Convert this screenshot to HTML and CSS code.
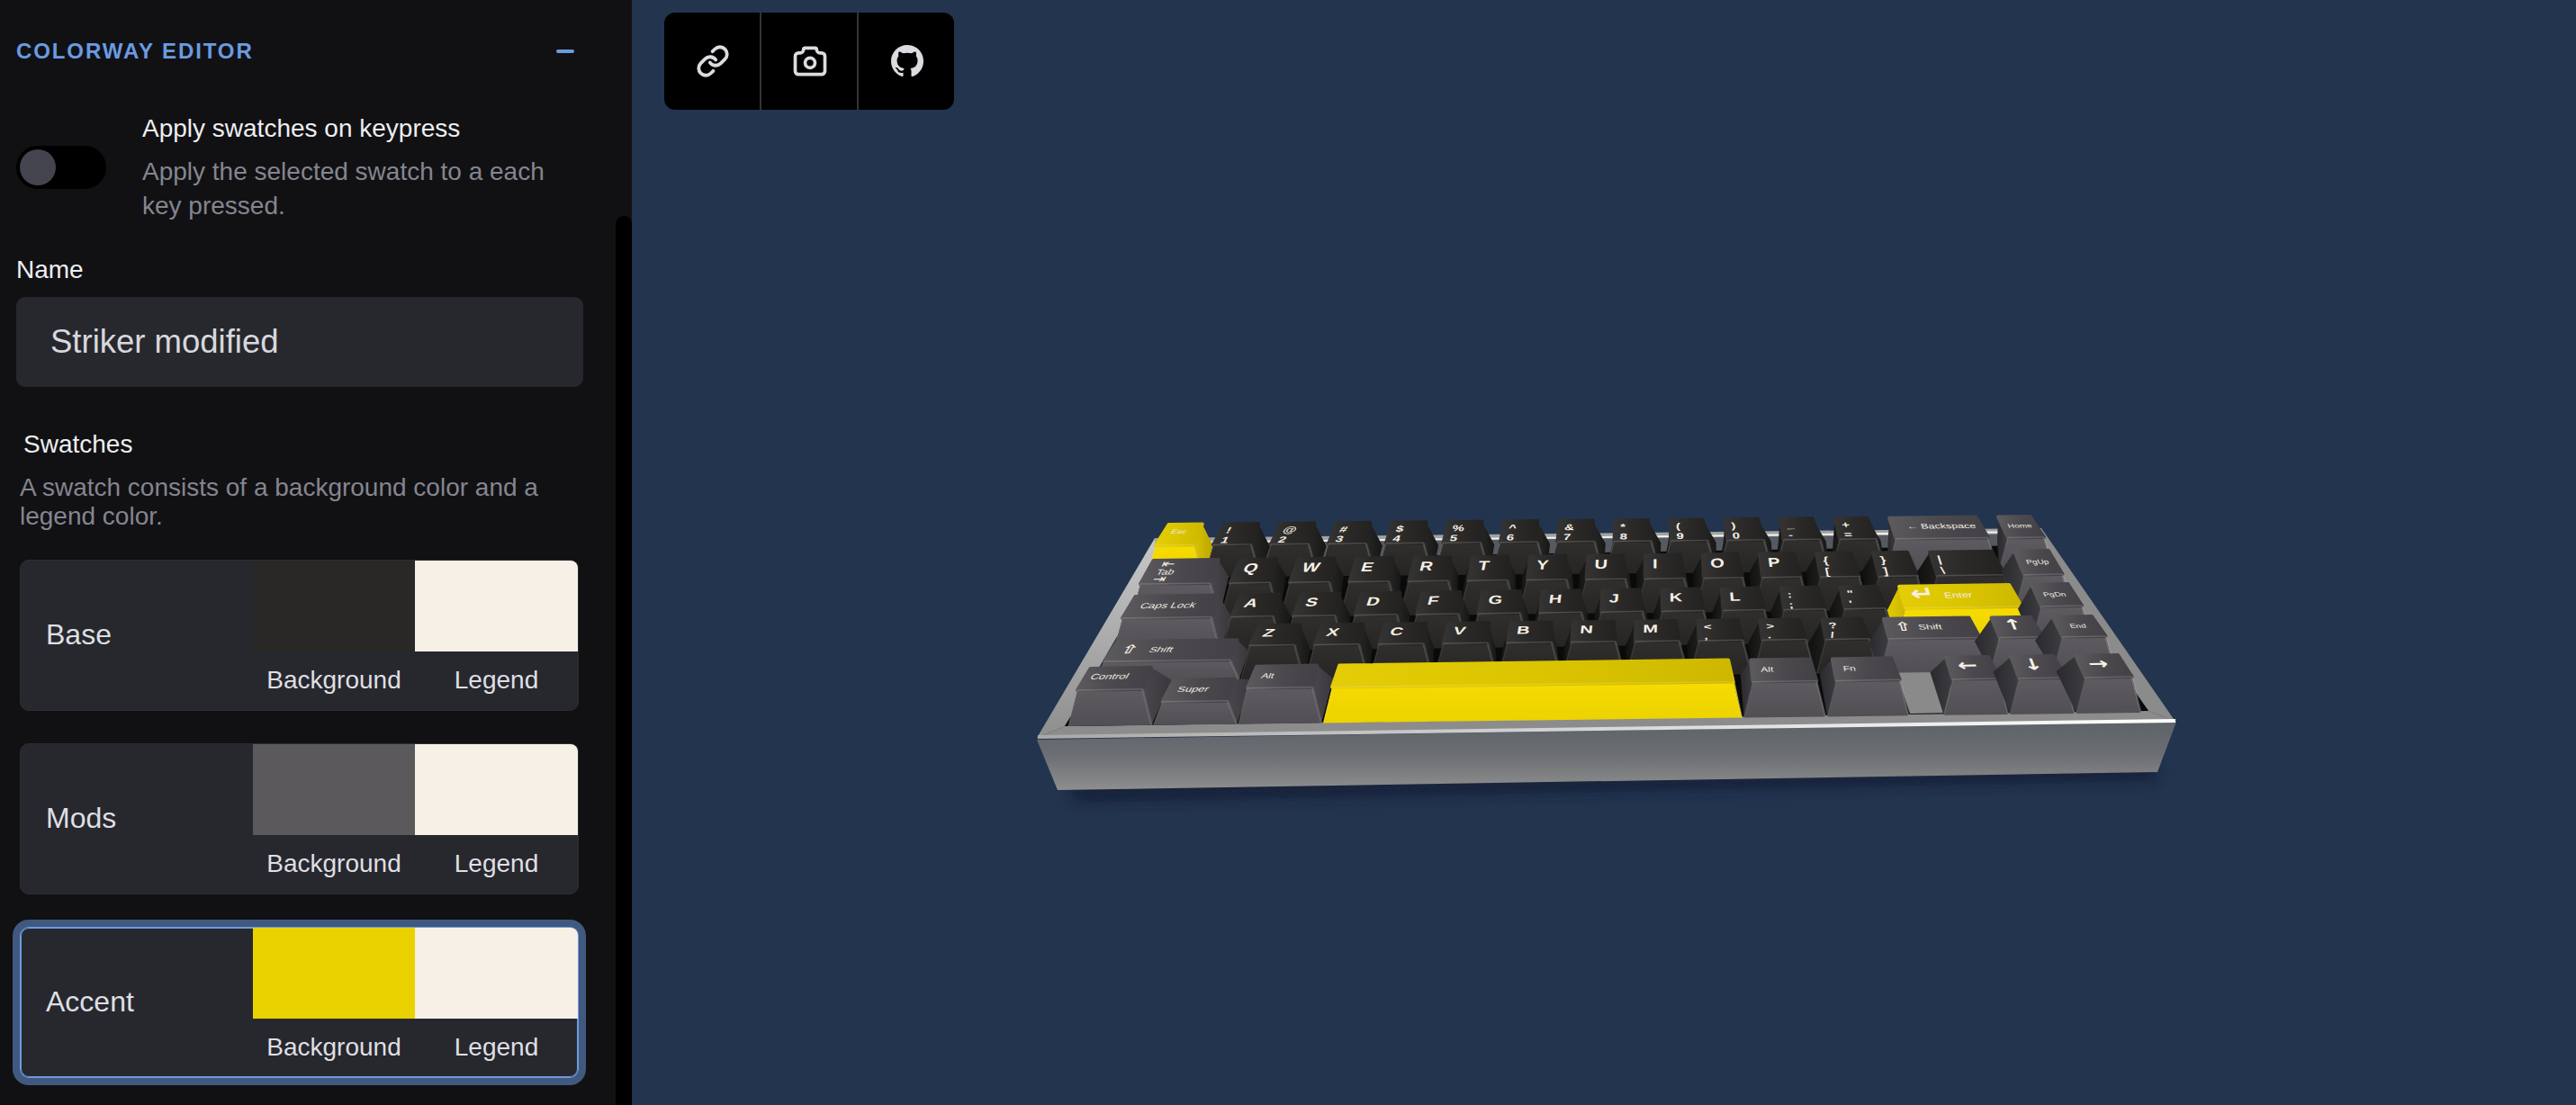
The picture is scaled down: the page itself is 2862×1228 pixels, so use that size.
FILE: index.html
```html
<!DOCTYPE html>
<html lang="en">
<head>
    <meta charset="UTF-8">
    <title>Colorway Editor</title>
    <link rel="stylesheet" href="styles.css">
</head>
<body>
    <div class="sidebar">
        <div class="scroll-track"></div>

        <div class="panel-head">
            <span class="panel-title">COLORWAY EDITOR</span>
            <span class="panel-collapse"></span>
        </div>

        <div class="toggle-row">
            <div class="toggle"><span class="toggle-thumb"></span></div>
            <div class="toggle-text">
                <div class="toggle-title">Apply swatches on keypress</div>
                <div class="toggle-desc">Apply the selected swatch to a each key pressed.</div>
            </div>
        </div>

        <div class="name-label">Name</div>
        <div class="name-input">Striker modified</div>

        <div class="swatches-label">Swatches</div>
        <div class="swatches-desc">A swatch consists of a background color and a legend color.</div>

        <div class="swatch-card">
            <div class="swatch-name">Base</div>
            <div class="swatch-col">
                <div class="swatch-color color-base"></div>
                <div class="swatch-caption">Background</div>
            </div>
            <div class="swatch-col">
                <div class="swatch-color color-legend"></div>
                <div class="swatch-caption">Legend</div>
            </div>
        </div>

        <div class="swatch-card">
            <div class="swatch-name">Mods</div>
            <div class="swatch-col">
                <div class="swatch-color color-mods"></div>
                <div class="swatch-caption">Background</div>
            </div>
            <div class="swatch-col">
                <div class="swatch-color color-legend"></div>
                <div class="swatch-caption">Legend</div>
            </div>
        </div>

        <div class="swatch-card selected">
            <div class="swatch-name">Accent</div>
            <div class="swatch-col">
                <div class="swatch-color color-accent"></div>
                <div class="swatch-caption">Background</div>
            </div>
            <div class="swatch-col">
                <div class="swatch-color color-legend"></div>
                <div class="swatch-caption">Legend</div>
            </div>
        </div>
    </div>

    <div class="stage">
        <svg id="keyboard" class="keyboard" viewBox="702 0 2160 1228"></svg>

        <div class="toolbar">
            <div class="tool-btn">
                <svg class="icon-link" viewBox="0 0 24 24" fill="none" stroke="currentColor" stroke-width="2.4" stroke-linecap="round" stroke-linejoin="round">
                    <path d="M10 13a5 5 0 0 0 7.54.54l3-3a5 5 0 0 0-7.07-7.07l-1.72 1.71"/>
                    <path d="M14 11a5 5 0 0 0-7.54-.54l-3 3a5 5 0 0 0 7.07 7.07l1.71-1.71"/>
                </svg>
            </div>
            <div class="tool-btn">
                <svg class="icon-camera" viewBox="0 0 24 24" fill="none" stroke="currentColor" stroke-width="2" stroke-linecap="round" stroke-linejoin="round">
                    <path d="M5 7h1a2 2 0 0 0 2 -2a1 1 0 0 1 1 -1h6a1 1 0 0 1 1 1a2 2 0 0 0 2 2h1a2 2 0 0 1 2 2v9a2 2 0 0 1 -2 2h-14a2 2 0 0 1 -2 -2v-9a2 2 0 0 1 2 -2"/>
                    <circle cx="12" cy="13" r="3"/>
                </svg>
            </div>
            <div class="tool-btn">
                <svg class="icon-github" viewBox="0 0 16 16" fill="currentColor">
                    <path d="M8 0C3.58 0 0 3.58 0 8c0 3.54 2.29 6.53 5.47 7.59.4.07.55-.17.55-.38 0-.19-.01-.82-.01-1.49-2.01.37-2.53-.49-2.69-.94-.09-.23-.48-.94-.82-1.13-.28-.15-.68-.52-.01-.53.63-.01 1.08.58 1.23.82.72 1.21 1.87.87 2.33.66.07-.52.28-.87.51-1.07-1.78-.2-3.64-.89-3.64-3.95 0-.87.31-1.59.82-2.15-.08-.2-.36-1.02.08-2.12 0 0 .67-.21 2.2.82.64-.18 1.32-.27 2-.27.68 0 1.36.09 2 .27 1.53-1.04 2.2-.82 2.2-.82.44 1.1.16 1.92.08 2.12.51.56.82 1.27.82 2.15 0 3.07-1.87 3.75-3.65 3.95.29.25.54.73.54 1.48 0 1.07-.01 1.93-.01 2.2 0 .21.15.46.55.38A8.013 8.013 0 0016 8c0-4.42-3.58-8-8-8z"/>
                </svg>
            </div>
        </div>
    </div>

    <script src="keyboard.js"></script>
</body>
</html>
```

FILE: styles.css
```css
* {
    margin: 0;
    padding: 0;
    box-sizing: border-box;
    font-family: "Liberation Sans", Arial, sans-serif;
}

body {
    display: flex;
    height: 1228px;
    overflow: hidden;
    background-color: #23344f;
}

/* Left panel */
.sidebar {
    position: relative;
    width: 702px;
    height: 1228px;
    flex-shrink: 0;
    padding: 38px 54px 0 18px;
    background-color: #111114;
    overflow: hidden;
}

.scroll-track {
    position: absolute;
    top: 240px;
    right: 0;
    bottom: 0;
    width: 18px;
    background-color: #000;
    border-radius: 9px 9px 0 0;
}

.panel-head {
    display: flex;
    align-items: center;
    justify-content: space-between;
    height: 38px;
    padding-right: 10px;
}

.panel-title {
    font-size: 24px;
    font-weight: bold;
    letter-spacing: 1.9px;
    color: #6b9be0;
}

.panel-collapse {
    width: 20px;
    height: 4px;
    border-radius: 2px;
    background-color: #6b9be0;
}

.toggle-row {
    display: flex;
    align-items: center;
    margin-top: 48px;
}

.toggle {
    width: 100px;
    height: 48px;
    flex-shrink: 0;
    padding: 4px;
    background-color: #000;
    border-radius: 24px;
}

.toggle-thumb {
    display: block;
    width: 40px;
    height: 40px;
    border-radius: 50%;
    background-color: #44444f;
}

.toggle-text {
    margin-left: 40px;
}

.toggle-title {
    font-size: 28px;
    line-height: 38px;
    color: #eeeef0;
}

.toggle-desc {
    margin-top: 10px;
    font-size: 28px;
    line-height: 38px;
    color: #85858f;
}

.name-label {
    margin-top: 36px;
    font-size: 28px;
    line-height: 32px;
    color: #eeeef0;
}

.name-input {
    display: flex;
    align-items: center;
    height: 100px;
    margin-top: 14px;
    padding-left: 38px;
    font-size: 36.5px;
    color: #d8d8dc;
    background-color: #27282e;
    border-radius: 10px;
}

.swatches-label {
    margin-top: 48px;
    margin-left: 8px;
    font-size: 28px;
    line-height: 32px;
    color: #eeeef0;
}

.swatches-desc {
    margin-top: 16px;
    margin-left: 4px;
    font-size: 28px;
    line-height: 32px;
    color: #85858f;
}

.swatch-card {
    display: flex;
    width: 621px;
    height: 168px;
    margin: 32px 0 36px 4px;
    background-color: #27282e;
    border: 1px solid #2c2d33;
    border-radius: 10px;
}

.swatch-card + .swatch-card {
    margin-top: 0;
}

.swatch-card.selected {
    border-color: #6d9be0;
    box-shadow: inset 0 0 0 1px #6d9be0, 0 0 0 8px #41597f;
}

.swatch-name {
    flex: 1;
    display: flex;
    align-items: center;
    padding: 0 0 2px 28px;
    font-size: 32px;
    color: #dfdfe3;
}

.swatch-col {
    width: 180px;
}

.swatch-col:last-child {
    width: 181px;
}

.swatch-color {
    height: 101px;
}

.swatch-col:last-child .swatch-color {
    border-top-right-radius: 8px;
}

.color-base {
    background-color: #292826;
}

.color-mods {
    background-color: #5b595c;
}

.color-accent {
    background-color: #ead100;
}

.color-legend {
    background-color: #f6f0e6;
}

.swatch-caption {
    margin-top: 16px;
    font-size: 28px;
    line-height: 32px;
    text-align: center;
    color: #dfdfe3;
}

/* 3D view */
.stage {
    position: relative;
    flex: 1;
    height: 1228px;
}

.keyboard {
    position: absolute;
    top: 0;
    left: 0;
    width: 2160px;
    height: 1228px;
}

.lg-bold {
    font-family: "Liberation Sans", "DejaVu Sans", sans-serif;
    font-weight: bold;
    fill: #f6f0e6;
}

.lg-small {
    font-family: "Liberation Sans", "DejaVu Sans", sans-serif;
    fill: #f0ebe2;
}

.lg-glyph {
    font-family: "DejaVu Sans", sans-serif;
    font-weight: bold;
    fill: #f6f0e6;
}

.cap-top {
    stroke-width: 4;
    stroke-linejoin: round;
}

.toolbar {
    position: absolute;
    top: 14px;
    left: 36px;
    display: flex;
    width: 322px;
    height: 108px;
    background-color: #000;
    border-radius: 12px;
}

.tool-btn {
    flex: 1;
    display: flex;
    align-items: center;
    justify-content: center;
    padding-left: 2px;
    color: #dcdce0;
    border-left: 2px solid #333;
}

.tool-btn:first-child {
    border-left: none;
}

.icon-link {
    width: 38px;
    height: 38px;
}

.icon-camera {
    width: 44px;
    height: 44px;
}

.icon-github {
    width: 36px;
    height: 36px;
}
```

FILE: keyboard.js
```js
// Row tables, measured off the render. Index 0 is the line behind row 0.
const rowLeft = [1290, 1273, 1256, 1236, 1216, 1186];
const rowPitch = [61.6, 63.06, 65.4, 68, 70.9, 74.6];
const topYLeft = [569, 606, 649, 687, 719, 767];
const topYRight = [559, 597, 638, 673, 707, 752];
const keyHeight = [40, 36, 38, 38, 38, 40];
const topDepth = [22, 23, 26, 24, 22, 24];

// small: [text, x, y, font size]  pre: [glyph, x, y, font size]
const keys = [
    // row 0
    { r: 0, a: 0, b: 1, c: 'acc', small: ['Esc', 8, 16, 10] },
    { r: 0, a: 1, b: 2, num: ['!', '1'] }, { r: 0, a: 2, b: 3, num: ['@', '2'] },
    { r: 0, a: 3, b: 4, num: ['#', '3'] }, { r: 0, a: 4, b: 5, num: ['$', '4'] },
    { r: 0, a: 5, b: 6, num: ['%', '5'] }, { r: 0, a: 6, b: 7, num: ['^', '6'] },
    { r: 0, a: 7, b: 8, num: ['&', '7'] }, { r: 0, a: 8, b: 9, num: ['*', '8'] },
    { r: 0, a: 9, b: 10, num: ['(', '9'] }, { r: 0, a: 10, b: 11, num: [')', '0'] },
    { r: 0, a: 11, b: 12, num: ['_', '-'] }, { r: 0, a: 12, b: 13, num: ['+', '='] },
    { r: 0, a: 13, b: 15, c: 'mod', small: ['← Backspace', 16, 19, 12.5] },
    { r: 0, a: 15, b: 16, c: 'mod', small: ['Home', 6, 19, 10] },
    // row 1
    { r: 1, a: 0, b: 1.5, c: 'mod', tab: true },
    ...'QWERTYUIOP'.split('').map((k, i) => ({ r: 1, a: 1.5 + i, b: 2.5 + i, ch: k })),
    { r: 1, a: 11.5, b: 12.5, num: ['{', '['] }, { r: 1, a: 12.5, b: 13.5, num: ['}', ']'] },
    { r: 1, a: 13.5, b: 15, num: ['|', '\\'] },
    { r: 1, a: 15, b: 16, c: 'mod', small: ['PgUp', 8, 20, 10] },
    // row 2
    { r: 2, a: 0, b: 1.75, c: 'mod', small: ['Caps Lock', 12, 20, 13] },
    ...'ASDFGHJKL'.split('').map((k, i) => ({ r: 2, a: 1.75 + i, b: 2.75 + i, ch: k })),
    { r: 2, a: 10.75, b: 11.75, num: [':', ';'] }, { r: 2, a: 11.75, b: 12.75, num: ['"', "'"] },
    { r: 2, a: 12.75, b: 15, c: 'acc', pre: ['↵', 10, 23, 32], small: ['Enter', 47, 20, 13] },
    { r: 2, a: 15, b: 16, c: 'mod', small: ['PgDn', 8, 20, 10] },
    // row 3
    { r: 3, a: 0, b: 2.25, c: 'mod', dy: 16, pre: ['⇧', 10, 22, 22], small: ['Shift', 42, 20, 13] },
    ...'ZXCVBNM'.split('').map((k, i) => ({ r: 3, a: 2.25 + i, b: 3.25 + i, ch: k })),
    { r: 3, a: 9.25, b: 10.25, num: ['<', ','] }, { r: 3, a: 10.25, b: 11.25, num: ['>', '.'] },
    { r: 3, a: 11.25, b: 12.25, num: ['?', '/'] },
    { r: 3, a: 12.25, b: 14, c: 'mod', pre: ['⇧', 10, 22, 22], small: ['Shift', 36, 20, 13] },
    { r: 3, a: 14, b: 15, c: 'mod', arrow: '↑' },
    { r: 3, a: 15, b: 16, c: 'mod', small: ['End', 14, 20, 10] },
    // row 4
    { r: 4, a: 0, b: 1.25, c: 'mod', small: ['Control', 6, 18, 13] },
    { r: 4, a: 1.25, b: 2.5, c: 'mod', dy: 14, small: ['Super', 10, 20, 13] },
    { r: 4, a: 2.5, b: 3.75, c: 'mod', small: ['Alt', 10, 20, 12] },
    { r: 4, a: 3.75, b: 10, c: 'acc' },
    { r: 4, a: 10, b: 11.25, c: 'mod', small: ['Alt', 10, 20, 12] },
    { r: 4, a: 11.25, b: 12.5, c: 'mod', small: ['Fn', 10, 20, 12] },
    { r: 4, a: 13, b: 14, c: 'mod', arrow: '←' },
    { r: 4, a: 14, b: 15, c: 'mod', arrow: '↓' },
    { r: 4, a: 15, b: 16, c: 'mod', arrow: '→' }
];

const pts = (...list) => list.map(p => `${p[0].toFixed(1)},${p[1].toFixed(1)}`).join(' ');
const poly = (fill, ...list) => `<polygon fill="${fill}" points="${pts(...list)}"/>`;
const edge = (p, q, color, w) =>
    `<line x1="${p[0]}" y1="${p[1]}" x2="${q[0]}" y2="${q[1]}" stroke="${color}" stroke-width="${w}"/>`;

// index 0 of the tables is the back line, so row r lives at r + 1
const cellX = (r, u) => rowLeft[r + 1] + u * rowPitch[r + 1] + 5 * Math.sin(Math.PI * u / 16);
const topY = (r, u) => topYLeft[r + 1] + (topYRight[r + 1] - topYLeft[r + 1]) * u / 16;
const lean = u => 13 - 27 * u / 16;

function legendText(key, fl, bl, fr, depth) {
    // local space: x along the key's front edge, y runs 0-36 from back to front
    const w = fr[0] - fl[0];
    const my = (fr[1] - fl[1]) / w;
    const sx = (fl[0] - bl[0]) / 36;
    const sy = depth / 36;
    const open = `<g transform="matrix(1 ${my.toFixed(4)} ${sx.toFixed(3)} ${sy.toFixed(3)} ${bl[0].toFixed(1)} ${bl[1].toFixed(1)})">`;
    let out = '';
    const put = (s, x, y, size, cls) => {
        const safe = s.replace('&', '&amp;').replace('<', '&lt;');
        out += `<text class="${cls}" x="${x}" y="${y}" font-size="${size}">${safe}</text>`;
    };
    if (key.ch) put(key.ch, 8, 20, 20, 'lg-bold');
    if (key.num) {
        put(key.num[0], 6, 16, 15, 'lg-bold');
        put(key.num[1], 6, 33, 15, 'lg-bold');
    }
    if (key.pre) put(key.pre[0], key.pre[1], key.pre[2], key.pre[3], 'lg-glyph');
    if (key.small) put(key.small[0], key.small[1], key.small[2], key.small[3], 'lg-small');
    if (key.arrow) put(key.arrow, 10, 22, 26, 'lg-glyph');
    if (key.tab) {
        put('⇤', 12, 11, 17, 'lg-small');
        put('Tab', 11, 22, 12, 'lg-small');
        put('⇥', 11, 34, 17, 'lg-small');
    }
    return open + out + '</g>';
}

function drawKey(key) {
    const c = key.c || 'dark';
    const dy = key.dy || 0;
    const depth = topDepth[key.r + 1];
    const h = keyHeight[key.r + 1];

    const fl = [cellX(key.r, key.a) + 11, topY(key.r, key.a) + dy];
    const fr = [cellX(key.r, key.b) - 11, topY(key.r, key.b) + dy];
    const bl = [fl[0] + lean(key.a) + 1.5, fl[1] - depth];
    const br = [fr[0] + lean(key.b) - 1.5, fr[1] - depth];

    const baseFl = [cellX(key.r, key.a) + 1, topY(key.r, key.a) + h];
    const baseFr = [cellX(key.r, key.b) - 1, topY(key.r, key.b) + h];
    const backR = key.r - 1;
    const baseBl = [cellX(backR, key.a) + 4, topY(backR, key.a) + keyHeight[backR + 1]];
    const baseBr = [cellX(backR, key.b) - 4, topY(backR, key.b) + keyHeight[backR + 1]];

    const topFace = poly(`url(#top-${c})`, bl, br, fr, fl)
        .replace('<polygon', `<polygon class="cap-top" stroke="url(#top-${c})"`);

    return poly(`url(#left-${c})`, bl, fl, baseFl, baseBl)
        + poly(`url(#right-${c})`, br, fr, baseFr, baseBr)
        + poly(`url(#front-${c})`, fl, fr, baseFr, baseFl)
        + topFace
        + edge(fl, fr, 'rgba(255,255,255,.16)', 1.5)
        + edge(fl, baseFl, 'rgba(255,255,255,.1)', 1.5)
        + edge(fr, baseFr, 'rgba(255,255,255,.14)', 2.5)
        + legendText(key, fl, bl, fr, depth);
}

const grad = (id, x2, y2, stops) =>
    `<linearGradient id="${id}" x1="0" y1="0" x2="${x2}" y2="${y2}">`
    + stops.map((s, i) => `<stop offset="${i / (stops.length - 1)}" stop-color="${s}"/>`).join('')
    + '</linearGradient>';

const defs = '<defs>'
    + grad('top-dark', 1, 0, ['#353432', '#2a2927', '#232220'])
    + grad('front-dark', 0, 1, ['#302f2d', '#262523'])
    + grad('left-dark', 1, 0, ['#101010', '#1f1f1d'])
    + grad('right-dark', 1, 0, ['#272725', '#161615'])
    + grad('top-mod', 1, 0, ['#5c5a5d', '#4b494d', '#434145'])
    + grad('front-mod', 0, 1, ['#5e5c60', '#514f53'])
    + grad('left-mod', 1, 0, ['#2a292d', '#3d3c40'])
    + grad('right-mod', 1, 0, ['#4a484c', '#39373b'])
    + grad('top-acc', 1, 0, ['#e4cd06', '#dbc500', '#cdb800'])
    + grad('front-acc', 0, 1, ['#f6dc00', '#ecd200'])
    + grad('left-acc', 1, 0, ['#e4cc00', '#ccb500'])
    + grad('right-acc', 1, 0, ['#dcc500', '#b8a300'])
    + grad('case-front', 0, 1, ['#5d6369', '#6c6f73', '#8e8e8e'])
    + grad('case-left', 0, 1, ['#c8c8c8', '#8e8e8e'])
    + grad('case-line', 1, 0, ['#a8a8a8', '#d8d8d8', '#ffffff'])
    + '<filter id="soft" x="-10%" y="-100%" width="120%" height="300%"><feGaussianBlur stdDeviation="7"/></filter>'
    + '</defs>';

const body = poly('#14233b', [1185, 868], [2395, 848], [2398, 868], [1195, 892]).replace('<polygon', '<polygon filter="url(#soft)"')
    + poly('#8c8c8c', [1152, 820], [1183, 807], [2387, 790], [2417, 802])
    + poly('url(#case-left)', [1283, 598], [1152, 820], [1183, 807], [1300, 606])
    + poly('#8b8b8b', [2268, 587], [2417, 802], [2387, 790], [2252, 592])
    + poly('#a2a2a2', [1283, 598], [2268, 587], [2268, 598], [1283, 606])
    + poly('#555a60', [1283, 604], [2268, 593], [2268, 612], [1283, 622])
    + poly('#0a0a0a', [1300, 622], [2252, 606], [2387, 790], [1183, 807])
    + poly('#8a8a8a', [2104, 738], [2160, 738], [2176, 792], [2122, 793])
    + poly('url(#case-front)', [1152, 822], [2418, 802], [2397, 858], [1175, 878])
    + edge([1153, 819], [2417, 801], 'url(#case-line)', 4)
    + edge([1300, 603], [2252, 591], '#f0f0f0', 2);

document.getElementById('keyboard').innerHTML = defs + body + keys.map(drawKey).join('');
```
